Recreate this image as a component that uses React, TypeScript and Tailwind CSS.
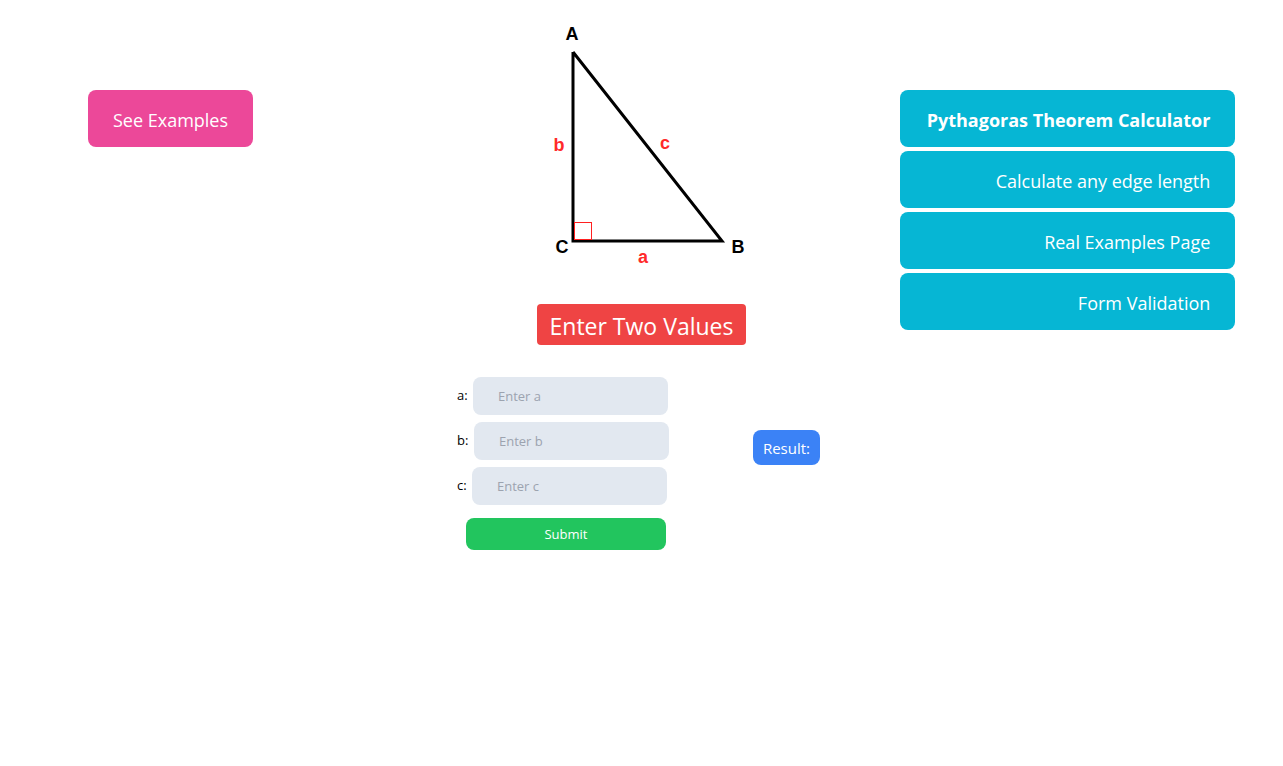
import React from "react";

function Triangle() {
  return (
    <svg width="200" height="250" viewBox="0 0 200 250" className="block overflow-visible">
      <polyline points="32,32 32,221 181,221 32,32" fill="none" stroke="#000" strokeWidth="3" strokeLinejoin="miter" />
      <rect x="33.5" y="202.5" width="17" height="17" fill="none" stroke="#ff2020" strokeWidth="1" />
      <g fontFamily="'Liberation Sans', Arial, sans-serif" fontWeight="700" fontSize="18" textAnchor="middle">
        <text x="31" y="20" fill="#000">A</text>
        <text x="21" y="233" fill="#000">C</text>
        <text x="197" y="233" fill="#000">B</text>
        <text x="18" y="131" fill="#ff2a2a">b</text>
        <text x="124" y="129" fill="#ff2a2a">c</text>
        <text x="102" y="243" fill="#ff2a2a">a</text>
      </g>
    </svg>
  );
}

export default function App() {
  const font = { fontFamily: "'Open Sans', 'Noto Sans', sans-serif" };
  return (
    <div className="w-[1283px] h-[766px] bg-white grid grid-cols-3 font-['Open_Sans','Noto_Sans',sans-serif]" style={font}>
      <div className="pt-[90px] pl-[88px]">
        <button className="w-[165px] h-[57px] pt-[3px] rounded-[8px] bg-[#ec4899] text-white text-[18px]">See Examples</button>
      </div>
      <div className="flex flex-col items-center pt-[20px]">
        <Triangle />
        <div className="mt-[34px] h-[41px] px-[13px] pt-[3px] rounded-[4px] bg-[#ef4444] text-white text-[23px] flex items-center">Enter Two Values</div>
        <div className="mt-[32px] flex items-start gap-[84px] pr-[6px]">
          <div className="flex flex-col gap-[7px] text-[13px]">
            <div className="flex items-center">
              <span className="w-[10px] text-black">a:</span>
              <input className="ml-[6px] w-[195px] h-[38px] rounded-[8px] bg-[#e2e8f0] pl-[25px] outline-none placeholder:text-[#9ca3af]" placeholder="Enter a" />
            </div>
            <div className="flex items-center">
              <span className="w-[10px] text-black">b:</span>
              <input className="ml-[7px] w-[195px] h-[38px] rounded-[8px] bg-[#e2e8f0] pl-[25px] outline-none placeholder:text-[#9ca3af]" placeholder="Enter b" />
            </div>
            <div className="flex items-center">
              <span className="w-[10px] text-black">c:</span>
              <input className="ml-[5px] w-[195px] h-[38px] rounded-[8px] bg-[#e2e8f0] pl-[25px] outline-none placeholder:text-[#9ca3af]" placeholder="Enter c" />
            </div>
            <button className="mt-[6px] ml-[9px] w-[200px] h-[32px] pt-[1px] rounded-[8px] bg-[#22c55e] text-white text-[13px]">Submit</button>
          </div>
          <div className="mt-[53px] h-[35px] px-[10px] pt-[1px] rounded-[8px] bg-[#3b82f6] text-white text-[15px] flex items-center">Result:</div>
        </div>
      </div>
      <div className="pt-[90px] pl-[45px]">
        <div className="w-[335px] flex flex-col gap-[4px]">
          <div className="h-[57px] pt-[3px] rounded-[8px] bg-[#06b6d4] text-white text-[18px] font-bold flex items-center justify-end pr-[25px]">Pythagoras Theorem Calculator</div>
          <div className="h-[57px] pt-[3px] rounded-[8px] bg-[#06b6d4] text-white text-[18px] flex items-center justify-end pr-[25px]">Calculate any edge length</div>
          <div className="h-[57px] pt-[3px] rounded-[8px] bg-[#06b6d4] text-white text-[18px] flex items-center justify-end pr-[25px]">Real Examples Page</div>
          <div className="h-[57px] pt-[3px] rounded-[8px] bg-[#06b6d4] text-white text-[18px] flex items-center justify-end pr-[25px]">Form Validation</div>
        </div>
      </div>
    </div>
  );
}
